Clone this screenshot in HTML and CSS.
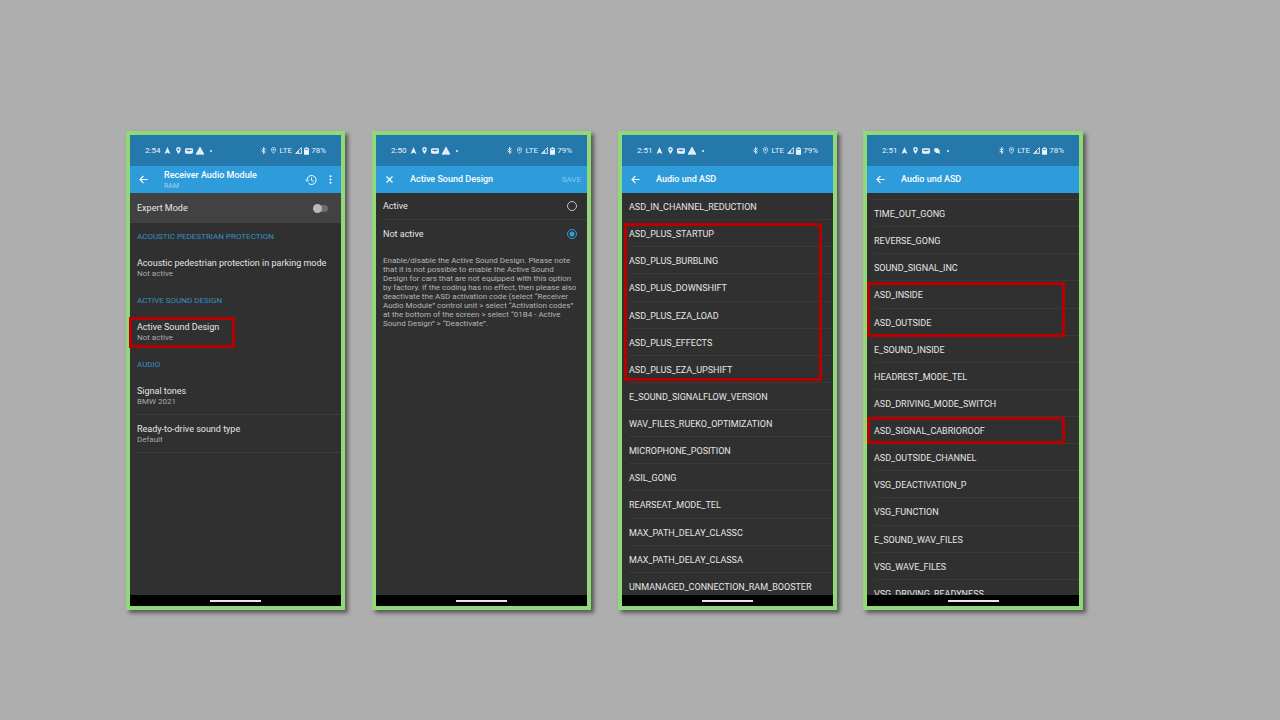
FILE: index.html
```
<!DOCTYPE html>
<html lang="en">
<head>
<meta charset="utf-8">
<title>Active Sound Design coding</title>
<link rel="stylesheet" href="styles.css">
</head>
<body>
<svg class="defs" aria-hidden="true">
  <symbol id="nav" viewBox="0 0 12 12"><path d="M6 0 11 12 6 9.500 1 12Z" fill="currentColor"/></symbol>
  <symbol id="pin" viewBox="0 0 12 12"><path fill-rule="evenodd" d="M6 0a4 4 0 0 0-4 4c0 3 4 8 4 8s4-5 4-8a4 4 0 0 0-4-4Zm0 2.400a1.700 1.700 0 1 1 0 3.400 1.700 1.700 0 0 1 0-3.400Z" fill="currentColor"/></symbol>
  <symbol id="card" viewBox="0 0 12 12"><path fill-rule="evenodd" d="M2 2h8q2 0 2 2v4q0 2-2 2H2Q0 10 0 8V4Q0 2 2 2ZM2 4v1.500h2L5 6.500H7L8 5.500h2V4Z" fill="currentColor"/></symbol>
  <symbol id="tri" viewBox="0 0 12 12"><path d="M6 0 9 5.500 3 5.500ZM2.700 6H5.700V11H0ZM6.300 6H9.300L12 11H6.300Z" fill="currentColor" stroke="currentColor" stroke-width="1"/></symbol>
  <symbol id="chat" viewBox="0 0 12 12"><path d="M2 2h6v2h2v7L8 9H4V7H2Z" fill="currentColor"/></symbol>
  <symbol id="bt" viewBox="0 0 12 12"><path d="M3 3 9 9 6 11.500V.5L9 3 3 9M1.500 6h1M9.500 6h1" fill="none" stroke="currentColor" stroke-width="1.400"/></symbol>
  <symbol id="loc" viewBox="0 0 12 12"><path d="M6 .8a3.700 3.700 0 0 0-3.700 3.700C2.300 7.200 6 11.200 6 11.200S9.700 7.200 9.700 4.500A3.700 3.700 0 0 0 6 .8Z" fill="none" stroke="currentColor" stroke-width="1.200"/><circle cx="6" cy="4.500" r="1.500" fill="currentColor"/></symbol>
  <symbol id="sig" viewBox="0 0 12 12"><path d="M1 11 11 1V11Z" fill="none" stroke="currentColor" stroke-width="1.500"/><path d="M3 10 7 6V10Z" fill="currentColor"/></symbol>
  <symbol id="bat" viewBox="0 0 8 12"><path fill-rule="evenodd" d="M2.500 0h3v1.500H8V12H0V1.500h2.500ZM1.500 3v1.500h5V3Z" fill="currentColor"/></symbol>
  <symbol id="back" viewBox="0 0 12 12"><path d="M11.500 6H1.500M6 1.300 1.300 6 6 10.700" fill="none" stroke="currentColor" stroke-width="1.500"/></symbol>
  <symbol id="close" viewBox="0 0 12 12"><path d="M2 2 10 10M10 2 2 10" fill="none" stroke="currentColor" stroke-width="1.600"/></symbol>
  <symbol id="history" viewBox="0 0 24 24"><path d="M4.200 12A9 9 0 1 1 7 18.500M1 11.500 4.200 15 7.600 11.500M13 7v5.500l4 2.500" fill="none" stroke="currentColor" stroke-width="2"/></symbol>
  <symbol id="more" viewBox="0 0 4 12"><g fill="currentColor"><circle cx="2" cy="1.700" r="1.400"/><circle cx="2" cy="6" r="1.400"/><circle cx="2" cy="10.300" r="1.400"/></g></symbol>
</svg>
<main class="board">

  <section class="phone">
    <div class="status">
      <span>2:54</span><svg><use href="#nav"/></svg><svg><use href="#pin"/></svg><svg class="wide"><use href="#card"/></svg><svg class="wide"><use href="#tri"/></svg><i class="dot"></i>
      <span class="right"><svg><use href="#bt"/></svg><svg><use href="#loc"/></svg><span>LTE</span><span class="power"><svg><use href="#sig"/></svg><svg class="bat"><use href="#bat"/></svg>78%</span></span>
    </div>
    <header class="bar">
      <button class="icon" aria-label="Back"><svg><use href="#back"/></svg></button>
      <div class="heading"><h1>Receiver Audio Module</h1><p>RAM</p></div>
      <button class="icon history" aria-label="History"><svg><use href="#history"/></svg></button>
      <button class="icon more" aria-label="More"><svg><use href="#more"/></svg></button>
    </header>
    <div class="screen">
      <label class="expert">Expert Mode<input class="switch" type="checkbox" role="switch"></label>
      <h2>ACOUSTIC PEDESTRIAN PROTECTION</h2>
      <div class="setting"><h3>Acoustic pedestrian protection in parking mode</h3><p>Not active</p></div>
      <h2>ACTIVE SOUND DESIGN</h2>
      <div class="setting"><h3>Active Sound Design</h3><p>Not active</p></div>
      <h2>AUDIO</h2>
      <div class="setting lined"><h3>Signal tones</h3><p>BMW 2021</p></div>
      <div class="setting lined"><h3>Ready-to-drive sound type</h3><p>Default</p></div>
      <span class="mark mark-setting"></span>
    </div>
    <footer class="home"><i></i></footer>
  </section>

  <section class="phone">
    <div class="status">
      <span>2:50</span><svg><use href="#nav"/></svg><svg><use href="#pin"/></svg><svg class="wide"><use href="#card"/></svg><svg class="wide"><use href="#tri"/></svg><i class="dot"></i>
      <span class="right"><svg><use href="#bt"/></svg><svg><use href="#loc"/></svg><span>LTE</span><span class="power"><svg><use href="#sig"/></svg><svg class="bat"><use href="#bat"/></svg>79%</span></span>
    </div>
    <header class="bar">
      <button class="icon" aria-label="Close"><svg><use href="#close"/></svg></button>
      <div class="heading"><h1>Active Sound Design</h1></div>
      <button class="save">SAVE</button>
    </header>
    <div class="screen">
      <label class="choice">Active<input type="radio" name="asd"></label>
      <label class="choice">Not active<input type="radio" name="asd" checked></label>
      <p class="note">Enable/disable the Active Sound Design. Please note<br>that it is not possible to enable the Active Sound<br>Design for cars that are not equipped with this option<br>by factory. If the coding has no effect, then please also<br>deactivate the ASD activation code (select “Receiver<br>Audio Module” control unit &gt; select “Activation codes”<br>at the bottom of the screen &gt; select “01B4 - Active<br>Sound Design” &gt; “Deactivate”.</p>
    </div>
    <footer class="home"><i></i></footer>
  </section>

  <section class="phone">
    <div class="status">
      <span>2:51</span><svg><use href="#nav"/></svg><svg><use href="#pin"/></svg><svg class="wide"><use href="#card"/></svg><svg class="wide"><use href="#tri"/></svg><i class="dot"></i>
      <span class="right"><svg><use href="#bt"/></svg><svg><use href="#loc"/></svg><span>LTE</span><span class="power"><svg><use href="#sig"/></svg><svg class="bat"><use href="#bat"/></svg>79%</span></span>
    </div>
    <header class="bar">
      <button class="icon" aria-label="Back"><svg><use href="#back"/></svg></button>
      <div class="heading"><h1>Audio und ASD</h1></div>
    </header>
    <div class="screen">
      <ul class="codes">
        <li>ASD_IN_CHANNEL_REDUCTION</li>
        <li>ASD_PLUS_STARTUP</li>
        <li>ASD_PLUS_BURBLING</li>
        <li>ASD_PLUS_DOWNSHIFT</li>
        <li>ASD_PLUS_EZA_LOAD</li>
        <li>ASD_PLUS_EFFECTS</li>
        <li>ASD_PLUS_EZA_UPSHIFT</li>
        <li>E_SOUND_SIGNALFLOW_VERSION</li>
        <li>WAV_FILES_RUEKO_OPTIMIZATION</li>
        <li>MICROPHONE_POSITION</li>
        <li>ASIL_GONG</li>
        <li>REARSEAT_MODE_TEL</li>
        <li>MAX_PATH_DELAY_CLASSC</li>
        <li>MAX_PATH_DELAY_CLASSA</li>
        <li>UNMANAGED_CONNECTION_RAM_BOOSTER</li>
      </ul>
      <span class="mark mark-plus"></span>
    </div>
    <footer class="home"><i></i></footer>
  </section>

  <section class="phone">
    <div class="status">
      <span>2:51</span><svg><use href="#nav"/></svg><svg><use href="#pin"/></svg><svg class="wide"><use href="#card"/></svg><svg class="wide"><use href="#chat"/></svg><i class="dot"></i>
      <span class="right"><svg><use href="#bt"/></svg><svg><use href="#loc"/></svg><span>LTE</span><span class="power"><svg><use href="#sig"/></svg><svg class="bat"><use href="#bat"/></svg>78%</span></span>
    </div>
    <header class="bar">
      <button class="icon" aria-label="Back"><svg><use href="#back"/></svg></button>
      <div class="heading"><h1>Audio und ASD</h1></div>
    </header>
    <div class="screen">
      <ul class="codes scrolled">
        <li>TIME_OUT_GONG</li>
        <li>REVERSE_GONG</li>
        <li>SOUND_SIGNAL_INC</li>
        <li>ASD_INSIDE</li>
        <li>ASD_OUTSIDE</li>
        <li>E_SOUND_INSIDE</li>
        <li>HEADREST_MODE_TEL</li>
        <li>ASD_DRIVING_MODE_SWITCH</li>
        <li>ASD_SIGNAL_CABRIOROOF</li>
        <li>ASD_OUTSIDE_CHANNEL</li>
        <li>VSG_DEACTIVATION_P</li>
        <li>VSG_FUNCTION</li>
        <li>E_SOUND_WAV_FILES</li>
        <li>VSG_WAVE_FILES</li>
        <li>VSG_DRIVING_READYNESS</li>
      </ul>
      <span class="mark mark-inside"></span>
      <span class="mark mark-roof"></span>
    </div>
    <footer class="home"><i></i></footer>
  </section>

</main>
</body>
</html>
```
FILE: styles.css
```
* { box-sizing: border-box; }
body { margin: 0; min-height: 100vh; background: #aeaeae; font-family: Roboto, "Liberation Sans", sans-serif; font-size: 9px; color: #e6e6e6; }
h1, h2, h3, p, ul { margin: 0; padding: 0; font-weight: 400; }
ul { list-style: none; }
button { border: 0; padding: 0; background: none; color: inherit; font: inherit; }
.defs { display: none; }
.board { display: grid; grid-template-columns: repeat(4, 1fr); gap: 27px; padding: 131px 197px 0 126px; }
.phone { border: 4px solid #90d878; background: #303030; box-shadow: 3px 3px 4px rgba(0, 0, 0, .5); }
.phone:last-child { margin-left: -1px; }

.status { display: flex; align-items: center; height: 31px; padding: 0 15px; background: #2478ac; color: #e9f3f9; font-size: 8px; }
.status svg { width: 7px; height: 7px; margin-left: 4px; }
.status .wide { width: 8px; height: 8px; margin-left: 3px; }
.dot { width: 2px; height: 2px; margin-left: 6px; border-radius: 50%; background: #e9f3f9; }
.right { display: flex; align-items: center; gap: 3px; margin-left: auto; }
.status .right svg { margin-left: 0; }
.power { display: flex; align-items: center; gap: 2px; }
.status .bat { width: 5px; height: 8px; }

.bar { display: flex; align-items: center; height: 27px; padding: 0 9px; background: #2e9bdb; color: #fff; }
.icon { display: grid; }
.icon svg { width: 9px; height: 9px; }
.heading { flex: 1; padding-left: 16px; }
.heading h1 { font-size: 9px; font-weight: 500; line-height: 13px; white-space: nowrap; }
.heading p { color: #a4d3f0; font-size: 7px; line-height: 9px; }
.history svg { width: 12px; height: 12px; }
.more { margin-left: 12px; }
.more svg { width: 3px; height: 9px; }
.save { color: #8bc8ec; font-size: 8px; margin-right: -3px; }

.screen { position: relative; height: 402px; overflow: hidden; white-space: nowrap; }
.phone:first-child .screen { overflow: visible; }
.expert { display: flex; align-items: center; justify-content: space-between; height: 30px; padding: 0 13px 0 7px; background: #424242; }
.switch { appearance: none; position: relative; width: 14px; height: 7px; margin: 0; border-radius: 4px; background: #6d6d6d; }
.switch::before { content: ""; position: absolute; left: -1px; top: -1px; width: 9px; height: 9px; border-radius: 50%; background: #b9b9b9; }
.screen h2 { height: 26px; padding-left: 7px; color: #3390c8; font-size: 8px; line-height: 28px; }
.setting { height: 38px; margin-left: 7px; padding-top: 8px; }
.setting h3 { font-size: 9px; line-height: 12px; }
.setting p { color: #aaa; font-size: 8px; line-height: 10px; }
.lined { border-bottom: 1px solid #3d3d3d; }

.choice { display: flex; align-items: center; justify-content: space-between; height: 27px; margin-left: 7px; padding-right: 10px; }
.choice:first-child { border-bottom: 1px solid #3d3d3d; }
.choice input { appearance: none; width: 10px; height: 10px; margin: 0; border: 1px solid #c4c4c4; border-radius: 50%; }
.choice input:checked { border-color: #2e9bdb; background: radial-gradient(circle, #2e9bdb 2px, transparent 3px); }
.note { padding: 9px 0 0 7px; color: #b5b5b5; font-size: 8px; line-height: 9px; }

.codes { display: grid; grid-template-rows: repeat(15, 1fr); height: 407px; }
.codes li { margin-left: 7px; border-bottom: 1px solid #3a3a3a; line-height: 28px; min-height: 0; }
.scrolled { height: 414px; padding-top: 7px; }
.scrolled li:first-child { box-shadow: 0 -1px #3a3a3a; }

.mark { position: absolute; border: 3px solid #b80000; }
.mark-setting { left: -1px; top: 124px; width: 106px; height: 31px; }
.mark-plus { left: 2px; top: 30px; width: 198px; height: 158px; }
.mark-inside { left: 0; top: 89px; width: 198px; height: 55px; }
.mark-roof { left: 0; top: 224px; width: 198px; height: 27px; }

.home { display: grid; place-items: center; height: 11px; background: #000; }
.home i { width: 51px; height: 2px; background: #e8e8e8; }
```
